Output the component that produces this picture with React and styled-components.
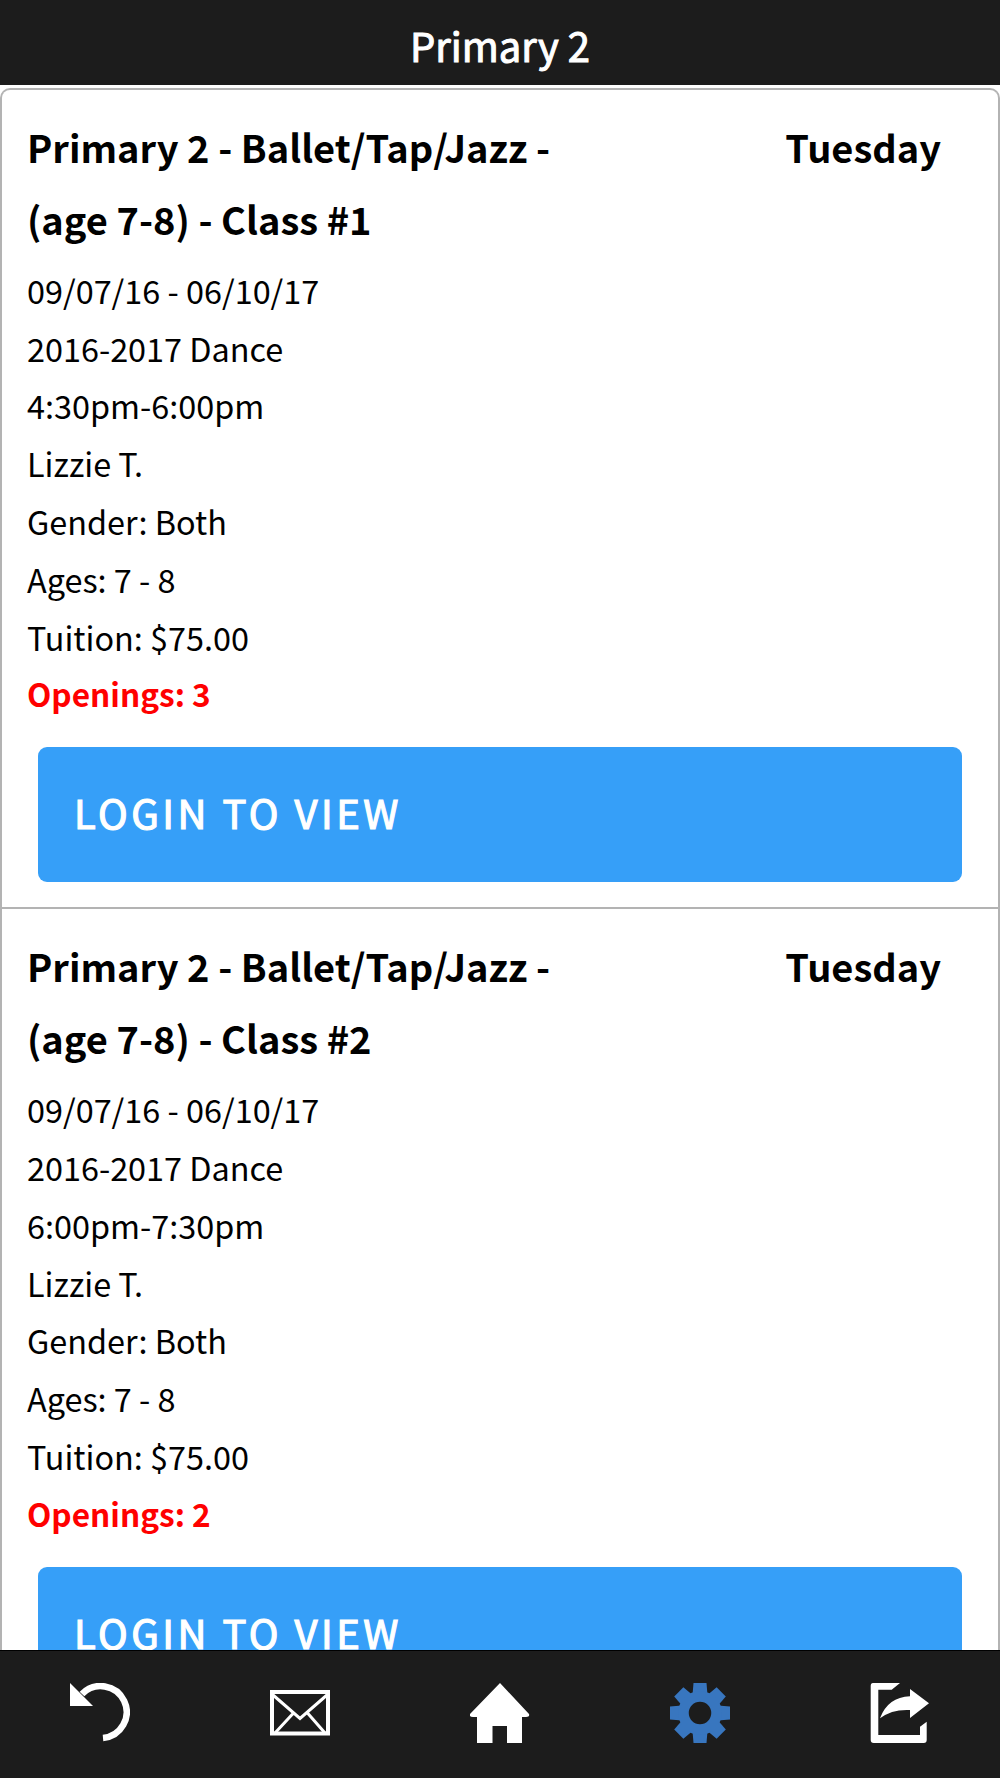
import React from "react";
import styled, { createGlobalStyle } from "styled-components";

const GlobalStyle = createGlobalStyle`
  html, body {
    margin: 0;
    padding: 0;
    background: #fff;
  }
  body {
    font-family: "Noto Sans CJK SC", "Noto Sans", sans-serif;
  }
`

const Page = styled.div`
  width: 1000px;
  height: 1778px;
  display: flex;
  flex-direction: column;
  overflow: hidden;
`

const Header = styled.div`
  flex: none;
  height: 85px;
  background: #1c1c1c;
  color: #fff;
  font-size: 40px;
  line-height: 91px;
  text-align: center;
  -webkit-text-stroke: 1px #fff;
`

const Content = styled.div`
  flex: 1;
  min-height: 0;
  overflow: hidden;
  padding-top: 3px;
`

const List = styled.div`
  border: 2px solid #b3b3b3;
  border-bottom: 0;
  border-radius: 10px 10px 0 0;
`

const Item = styled.div`
  padding: 20.5px 25px 25px;
  border-bottom: 2px solid #b3b3b3;
`

const TitleRow = styled.div`
  display: flex;
  justify-content: space-between;
  font-weight: 700;
  font-size: 38px;
  line-height: 72px;
  color: #000;
`

const Title = styled.div`
  width: 560px;
`

const Day = styled.div`
  margin-right: 32px;
`

const Details = styled.div`
  margin-top: 6.3px;
`

const Line = styled.div`
  font-size: ${(props) => (props.$alert ? "31.6px" : "32.4px")};
  line-height: 57.8px;
  color: ${(props) => (props.$alert ? "#ff0000" : "#000")};
  font-weight: ${(props) => (props.$alert ? 700 : 400)};
`

const LoginButton = styled.div`
  margin: 24.2px 11px 0;
  height: 135px;
  box-sizing: border-box;
  padding: 0 0 5px 36px;
  display: flex;
  align-items: center;
  background: #369ff8;
  border-radius: 9px;
  color: #fff;
  font-size: 40px;
  letter-spacing: 3.5px;
  -webkit-text-stroke: 1.2px #fff;
`

const Footer = styled.div`
  flex: none;
  height: 128px;
  display: grid;
  grid-template-columns: repeat(5, 200px);
  background: #1c1c1c;
  border-top: 1px solid #000;
  box-sizing: border-box;
`

const Tab = styled.div`
  display: flex;
  align-items: center;
  justify-content: center;
  padding-bottom: 3px;
  color: ${(props) => (props.$active ? "#3876bf" : "#fff")};
`

const Icon = styled.svg`
  width: 60px;
  height: 60px;
  display: block;
`

const UndoIcon = () => (
  <Icon viewBox="0 0 60 60">
    <path d="M33 55A26 26 0 1 0 12 11" fill="none" stroke="currentColor" strokeWidth="6.5" />
    <path d="M0 0V23H23Z" fill="currentColor" />
  </Icon>
)

const MailIcon = () => (
  <Icon viewBox="0 0 60 60">
    <g fill="none" stroke="currentColor">
      <rect x="2" y="9" width="56" height="41.5" strokeWidth="4" />
      <path d="M3 12L30 35.5L57 12M23.5 30L5 50M37.5 30L55 50" strokeWidth="3" />
    </g>
  </Icon>
)

const HomeIcon = () => (
  <Icon viewBox="0 0 60 60">
    <path
      d="M30 0L59 31Q60 34 56 34H52V60H37V43H22.500V60H7V34H3Q-1 34 0 31Z"
      fill="currentColor"
    />
  </Icon>
)

// teeth are one shape rotated round the centre
const GearIcon = () => (
  <Icon viewBox="0 0 60 60">
    <g fill="currentColor">
      {[0, 45, 90, 135, 180, 225, 270, 315].map((a) => (
        <path key={a} d="M23.500 0H36.500L37.500 12H22.500Z" transform={`rotate(${a} 30 30)`} />
      ))}
    </g>
    <circle cx="30" cy="30" r="16.500" fill="none" stroke="currentColor" strokeWidth="10.500" />
  </Icon>
)

const ShareIcon = () => (
  <Icon viewBox="0 0 60 60">
    <path
      d="M3 0H30L21.700 6.700H8.300V52H50V43.700L56.700 38.700V57Q56.700 60 53.700 60H3.700Q0.700 60 0.700 57V3Q0.700 0 3 0Z"
      fill="currentColor"
    />
    <path d="M40 6L59 20.300L40 35V27Q22 26 10 35.300Q18 14 40 13.300Z" fill="currentColor" />
  </Icon>
)

const classes = [
  { number: 1, time: "4:30pm-6:00pm", openings: 3 },
  { number: 2, time: "6:00pm-7:30pm", openings: 2 },
]

const ClassItem = ({ number, time, openings }) => (
  <Item>
    <TitleRow>
      <Title>{`Primary 2 - Ballet/Tap/Jazz - (age 7-8) - Class #${number}`}</Title>
      <Day>Tuesday</Day>
    </TitleRow>
    <Details>
      <Line>09/07/16 - 06/10/17</Line>
      <Line>2016-2017 Dance</Line>
      <Line>{time}</Line>
      <Line>Lizzie T.</Line>
      <Line>Gender: Both</Line>
      <Line>Ages: 7 - 8</Line>
      <Line>Tuition: $75.00</Line>
      <Line $alert>{`Openings: ${openings}`}</Line>
    </Details>
    <LoginButton>LOGIN TO VIEW</LoginButton>
  </Item>
)

const App = () => {
  return (
    <Page>
      <GlobalStyle />
      <Header>Primary 2</Header>
      <Content>
        <List>
          {classes.map((c) => (
            <ClassItem key={c.number} {...c} />
          ))}
        </List>
      </Content>
      <Footer>
        <Tab><UndoIcon /></Tab>
        <Tab><MailIcon /></Tab>
        <Tab><HomeIcon /></Tab>
        <Tab $active><GearIcon /></Tab>
        <Tab><ShareIcon /></Tab>
      </Footer>
    </Page>
  )
}

export default App;
